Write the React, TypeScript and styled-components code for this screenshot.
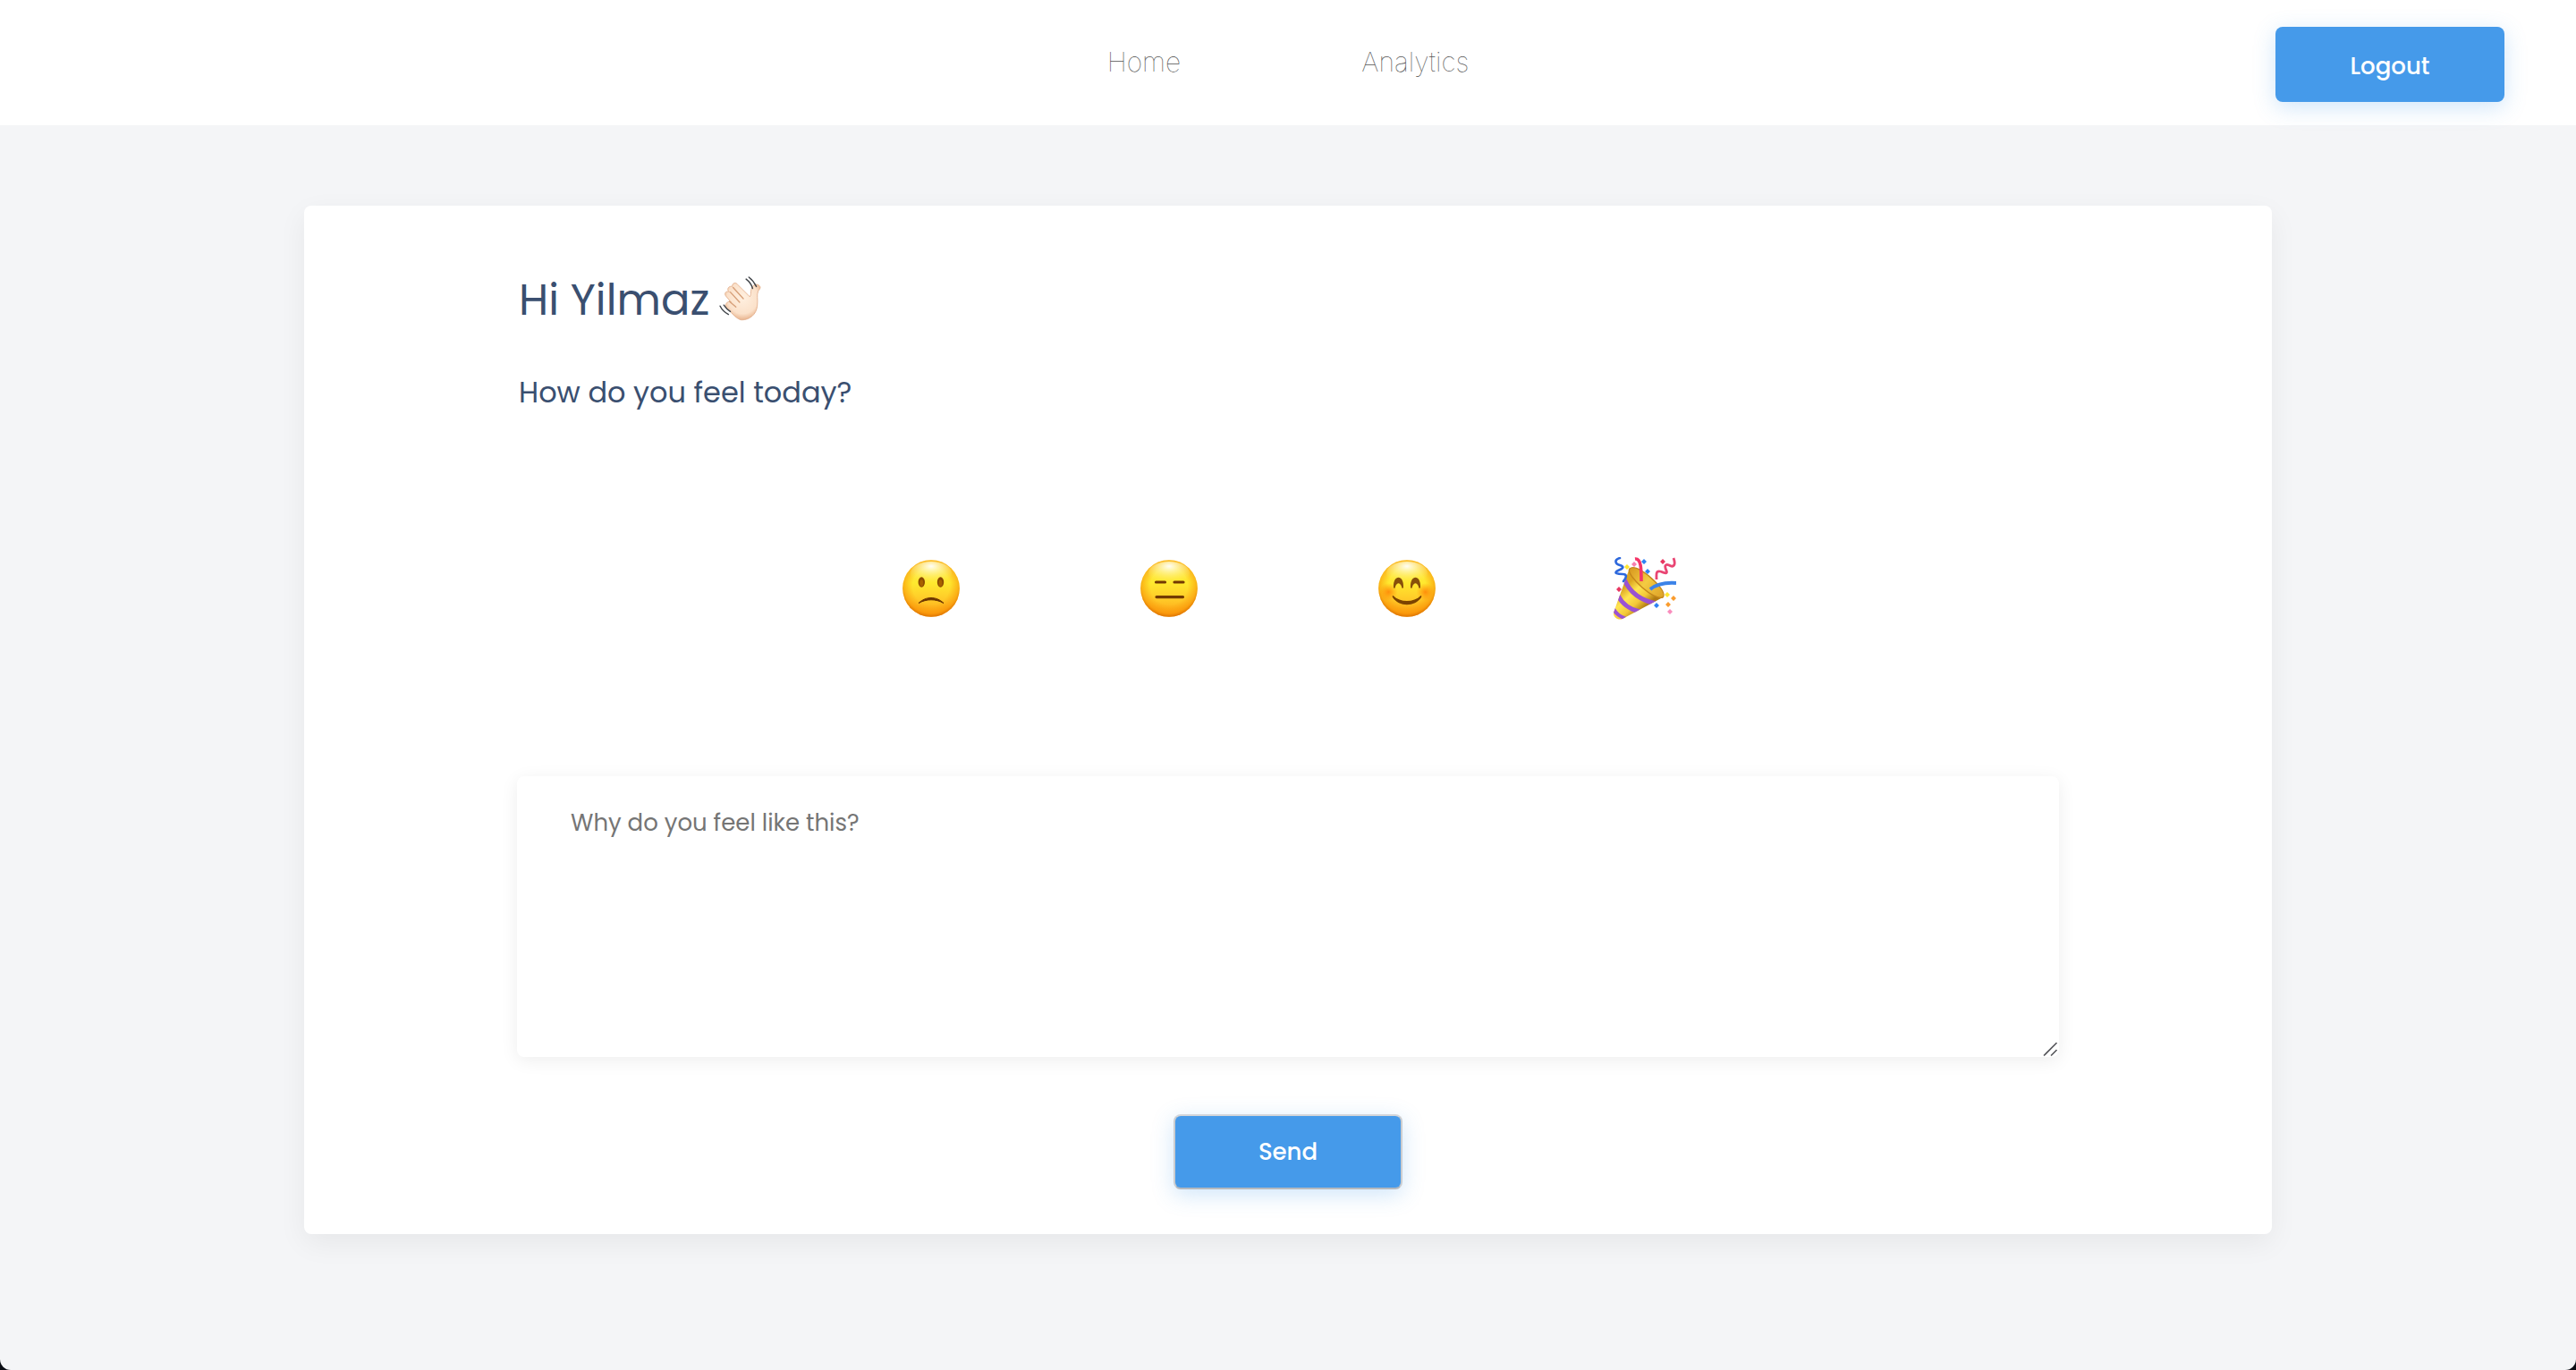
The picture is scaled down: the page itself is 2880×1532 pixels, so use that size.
import React, { useState } from "react";
import styled, { createGlobalStyle } from "styled-components";

const GlobalStyle = createGlobalStyle`
  *, *::before, *::after { box-sizing: border-box; }
  html { background: #0a0d14; }
  body {
    margin: 0;
    font-family: Poppins, Inter, "Open Sans", sans-serif;
  }
`;

const Page = styled.div`
  min-height: 100vh;
  background: #f4f5f7;
  border-radius: 0 0 12px 12px;
  overflow: hidden;
`;

const Header = styled.header`
  display: grid;
  grid-template-columns: 1fr auto 1fr;
  align-items: start;
  height: 140px;
  padding: 30px 80px 0;
  background: #fff;
`;

const Nav = styled.nav`
  grid-column: 2;
  display: flex;
  gap: 202px;
  padding-top: 19px;
`;

const NavLink = styled.a`
  font-family: Inter, sans-serif;
  font-size: 30px;
  line-height: 40px;
  font-weight: 100;
  color: #555;
  text-decoration: none;
`;

const Button = styled.button<{ $outlined?: boolean }>`
  width: 256px;
  height: 84px;
  padding: 0;
  border: ${(p) => (p.$outlined ? "2px solid" : "0")};
  border-color: #d3d5d9 #cbcdd0 #b5b9be;
  border-radius: 8px;
  background: #459aea;
  box-shadow: 0 6px 24px rgba(69, 154, 234, 0.25);
  color: #fff;
  font-family: inherit;
  font-size: 26px;
  line-height: 40px;
  font-weight: 500;
  cursor: pointer;
`;

const LogoutButton = styled(Button)`
  justify-self: end;
  padding-top: 4px;
`;

const Main = styled.main`
  display: flex;
  justify-content: center;
  padding: 90px 80px;
`;

const Card = styled.form`
  display: flex;
  flex-direction: column;
  width: 100%;
  max-width: 2200px;
  padding: 70px 238px 50px;
  border-radius: 8px;
  background: #fff;
  box-shadow: 0 10px 32px rgba(0, 0, 0, 0.06);
  color: #3a4f70;
`;

const Intro = styled.div`
  padding: 0 2px;
  margin-bottom: 160px;
`;

const Title = styled.h1`
  display: flex;
  align-items: center;
  gap: 10px;
  margin: 0 0 43px;
  font-size: 48px;
  line-height: 72px;
  font-weight: 400;
`;

const Question = styled.p`
  margin: 0;
  font-size: 32px;
  line-height: 48px;
`;

const Moods = styled.div`
  display: flex;
  justify-content: center;
  gap: 196px;
  margin-bottom: 175px;
`;

const Mood = styled.button`
  width: 70px;
  height: 70px;
  padding: 0;
  border: 0;
  background: none;
  cursor: pointer;

  svg { display: block; }
`;

const ReasonField = styled.div`
  position: relative;
  margin-bottom: 64px;
`;

const Reason = styled.textarea`
  display: block;
  width: 100%;
  height: 314px;
  padding: 32px 60px;
  border: 0;
  border-radius: 8px;
  outline: none;
  background: #fff;
  box-shadow: 0 4px 20px rgba(0, 0, 0, 0.07);
  color: #3a4f70;
  font-family: inherit;
  font-size: 26px;
  line-height: 40px;
  resize: vertical;

  &::placeholder { color: #757575; }
  &::-webkit-resizer { background: transparent; }
`;

const Grip = styled.svg`
  position: absolute;
  right: 1px;
  bottom: 0;
  pointer-events: none;
`;

const SendButton = styled(Button)`
  align-self: center;
`;

function WavingHand() {
  return (
    <svg width="54" height="54" viewBox="0 0 52 52" fill="none" aria-hidden="true">
      <defs>
        <radialGradient id="skin" cx="0.5" cy="0.4" r="0.62">
          <stop offset="0" stopColor="#fff0e0" />
          <stop offset="0.7" stopColor="#fbe1ca" />
          <stop offset="1" stopColor="#e6ae86" />
        </radialGradient>
      </defs>
      <path
        d="M9 29c1-2 3-2 5-1l-6-7c-2-3 1-6 4-4l-1-1c-2-3 1-6 4-5 0-4 4-5 6-2l13 13c2-2 0-7 3-11 2-3 6-3 8 0 1 2-1 3-2 5-2 4 0 9-1 16-1 9-8 15-17 15-5-1-8-5-16-13-2-2-1-4 0-5z"
        fill="url(#skin)"
        stroke="#e2ad88"
        strokeWidth="0.8"
      />
      <path d="M13 17l10 11M16 12l11 12M12 27l7 6" stroke="#d69f78" strokeWidth="1.3" strokeLinecap="round" />
      <path d="M30 3c4 3 6 6 7 10M33 1c4 3 6 6 8 10M2 32c2 4 5 7 9 9M6 31c2 3 4 5 7 7" stroke="#42464b" strokeWidth="1.4" strokeLinecap="round" />
    </svg>
  );
}

type Face = "sad" | "neutral" | "happy";

function FaceIcon({ face }: { face: Face }) {
  const fill = `${face}-fill`;
  const rim = `${face}-rim`;
  const blush = `${face}-blush`;
  const shine = `${face}-shine`;
  return (
    <svg width="70" height="70" viewBox="0 0 70 70" fill="none" aria-hidden="true">
      <defs>
        <linearGradient id={fill} x1="0" y1="0" x2="0" y2="1">
          <stop offset="0" stopColor="#ffe04a" />
          <stop offset="0.4" stopColor="#ffe92f" />
          <stop offset="0.7" stopColor="#ffc928" />
          <stop offset="1" stopColor="#fda012" />
        </linearGradient>
        <radialGradient id={rim} cx="0.5" cy="0.46" r="0.54">
          <stop offset="0.6" stopColor="#f78a00" stopOpacity="0" />
          <stop offset="0.88" stopColor="#f78a00" stopOpacity="0.5" />
          <stop offset="1" stopColor="#d86e00" stopOpacity="0.9" />
        </radialGradient>
        <radialGradient id={blush}>
          <stop offset="0" stopColor="#ff7600" stopOpacity="0.75" />
          <stop offset="1" stopColor="#ff8a00" stopOpacity="0" />
        </radialGradient>
        <radialGradient id={shine} cx="0.5" cy="0.2" r="0.7">
          <stop offset="0" stopColor="#fff" stopOpacity="0.95" />
          <stop offset="1" stopColor="#fff36a" stopOpacity="0" />
        </radialGradient>
      </defs>
      <circle cx="35" cy="35" r="31.8" fill={`url(#${fill})`} />
      <circle cx="35" cy="35" r="31.8" fill={`url(#${rim})`} />
      <ellipse cx="35" cy="18" rx="23" ry="13" fill={`url(#${shine})`} />
      {face === "sad" && (
        <>
          <ellipse cx="24.3" cy="28" rx="3.7" ry="5.8" fill="#8b4a00" />
          <ellipse cx="45.5" cy="28" rx="3.7" ry="5.8" fill="#8b4a00" />
          <ellipse cx="24.3" cy="29" rx="2" ry="3.8" fill="#a86200" />
          <ellipse cx="45.5" cy="29" rx="2" ry="3.8" fill="#a86200" />
          <path d="M21 51.5c8-8 20-8 28 0-9-5-19-5-28 0z" fill="#6b3400" stroke="#6b3400" strokeWidth="1" strokeLinejoin="round" />
        </>
      )}
      {face === "neutral" && (
        <path d="M20.5 28h10M41 28h10M21 44.6h29.5" stroke="#733a02" strokeWidth="3.2" strokeLinecap="round" />
      )}
      {face === "happy" && (
        <>
          <circle cx="14.5" cy="39" r="10" fill={`url(#${blush})`} />
          <circle cx="55.5" cy="39" r="10" fill={`url(#${blush})`} />
          <path d="M20 34c-1-15 12-15 11 0-1 2-2 0-2-1-2-5-5-5-7 0 0 1-1 3-2 1zM39 34c-1-15 12-15 11 0-1 2-2 0-2-1-2-5-5-5-7 0 0 1-1 3-2 1z" fill="#87500a" />
          <path d="M19.5 43c8 8 23 8 31 0 1 0 1 1 .5 2-7 11-25 11-32 0-.5-1-.5-2 .5-2z" fill="#7b4300" />
        </>
      )}
    </svg>
  );
}

function PartyIcon() {
  return (
    <svg width="70" height="70" viewBox="0 0 70 70" fill="none" aria-hidden="true">
      <defs>
        <linearGradient id="cone" x1="9" y1="36" x2="31" y2="60" gradientUnits="userSpaceOnUse">
          <stop offset="0" stopColor="#dca520" />
          <stop offset="0.35" stopColor="#ffe552" />
          <stop offset="0.7" stopColor="#f3c838" />
          <stop offset="1" stopColor="#b07a12" />
        </linearGradient>
        <linearGradient id="mouth" x1="20" y1="12" x2="54" y2="42" gradientUnits="userSpaceOnUse">
          <stop offset="0" stopColor="#d99a20" />
          <stop offset="0.5" stopColor="#f4cb42" />
          <stop offset="1" stopColor="#dfa62a" />
        </linearGradient>
        <clipPath id="cone-shape">
          <path d="M18 12C22 26 36 42 55 45L10 69C5 71-1 67 0 62z" />
        </clipPath>
      </defs>
      <path d="M18 12C22 26 36 42 55 45L10 69C5 71-1 67 0 62z" fill="url(#cone)" />
      <g clipPath="url(#cone-shape)" stroke="#9a52d2" strokeWidth="5">
        <path d="M12 25c5 12 16 23 36 27" />
        <path d="M5 43c4 8 12 15 24 18" />
        <path d="M0 58c3 6 7 8 14 11" strokeWidth="4" />
      </g>
      <path
        d="M18 13c5-5 19 5 28 14 8 8 12 15 9 18-5 2-15-4-23-11-9-8-17-18-14-21z"
        fill="url(#mouth)"
        stroke="#c4861a"
        strokeWidth="1.4"
      />
      <path d="M24 2c7-1 7 12 7 25" stroke="#f53568" strokeWidth="3.6" />
      <path d="M41 36c6-5 14-8 29-7" stroke="#3c83e8" strokeWidth="4" />
      <path d="M7 1C0 3 2 8 7 9c6 2 3 4-2 6-6 3 0 4 5 4s5 3 1 8" stroke="#2d68dc" strokeWidth="2.6" strokeLinecap="round" />
      <path d="M67 1c3 8 0 11-5 8-5-2-5 2-3 6 2 5-3 2-7 1-5-1-4 3-4 9" stroke="#e94573" strokeWidth="2.8" />
      <g>
        <path d="M15 8l3 3-3 3-3-3z" fill="#ffe52f" />
        <path d="M23 5l3 3-3 3-3-3z" fill="#f77fae" />
        <path d="M34 2l3 3-3 3-3-3zM38 13l3 3-3 3-3-3zM48 51l3 3-3 3-3-3z" fill="#2f82f5" />
        <path d="M55 2l3 3-3 3-3-3zM6 33l3 3-3 3-3-3z" fill="#e83661" />
        <path d="M60 39l3 3-3 3-3-3z" fill="#ffe52f" />
        <path d="M67 43l3 3-3 3-3-3zM61 50l3 3-3 3-3-3z" fill="#fa9c2e" />
        <path d="M63 58l3 3-3 3-3-3z" fill="#f98dbd" />
      </g>
    </svg>
  );
}

const moods = [
  { id: "sad", label: "Sad", icon: <FaceIcon face="sad" /> },
  { id: "neutral", label: "Neutral", icon: <FaceIcon face="neutral" /> },
  { id: "happy", label: "Happy", icon: <FaceIcon face="happy" /> },
  { id: "party", label: "Celebrating", icon: <PartyIcon /> },
];

export default function App() {
  const [mood, setMood] = useState<string | null>(null);
  const [reason, setReason] = useState("");

  return (
    <>
      <GlobalStyle />
      <Page>
        <Header>
          <Nav>
            <NavLink href="#home">Home</NavLink>
            <NavLink href="#analytics">Analytics</NavLink>
          </Nav>
          <LogoutButton type="button">Logout</LogoutButton>
        </Header>
        <Main>
          <Card onSubmit={(event: React.FormEvent) => event.preventDefault()}>
            <Intro>
              <Title>
                Hi Yilmaz <WavingHand />
              </Title>
              <Question>How do you feel today?</Question>
            </Intro>
            <Moods role="group" aria-label="Mood">
              {moods.map((item) => (
                <Mood
                  key={item.id}
                  type="button"
                  aria-label={item.label}
                  aria-pressed={mood === item.id}
                  onClick={() => setMood(item.id)}
                >
                  {item.icon}
                </Mood>
              ))}
            </Moods>
            <ReasonField>
              <Reason
                aria-label="Why do you feel like this?"
                placeholder="Why do you feel like this?"
                value={reason}
                onChange={(event) => setReason(event.target.value)}
              />
              <Grip width="17" height="17" viewBox="0 0 17 17" aria-hidden="true">
                <path d="M1 15.5L15.5 1M9 15.5L15.5 9" stroke="#55565a" strokeWidth="1.6" />
              </Grip>
            </ReasonField>
            <SendButton type="submit" $outlined>
              Send
            </SendButton>
          </Card>
        </Main>
      </Page>
    </>
  );
}
